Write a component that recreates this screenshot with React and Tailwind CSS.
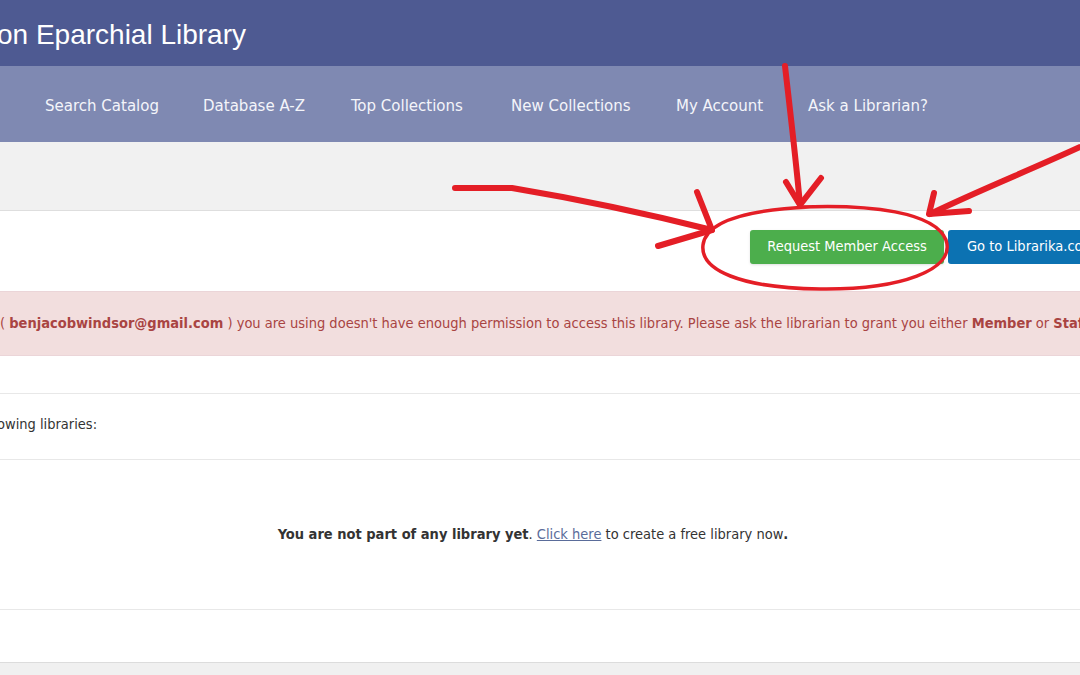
import React from 'react';

const navItems = [
  { label: 'Search Catalog', w: 'w-[158px]' },
  { label: 'Database A-Z', w: 'w-[148px]' },
  { label: 'Top Collections', w: 'w-[160px]' },
  { label: 'New Collections', w: 'w-[165px]' },
  { label: 'My Account', w: 'w-[132px]' },
  { label: 'Ask a Librarian?', w: 'w-[140px]' },
];

const Annotations = () => (
  <svg className="absolute inset-0 pointer-events-none" width="1080" height="675" viewBox="0 0 1080 675">
    <g fill="none" stroke="#e41e26" strokeLinecap="round" strokeLinejoin="round">
      {/* left arrow */}
      <path d="M455 188 L512 188 C560 196 640 212 712 230" strokeWidth="6" />
      <path d="M697 192 L712 230 L658 246" strokeWidth="6" />
      {/* middle arrow */}
      <path d="M785 66 C790 110 796 160 800 205" strokeWidth="6" />
      <path d="M786 182 L800 205 L821 178" strokeWidth="6" />
      {/* right arrow */}
      <path d="M1080 147 C1030 170 975 192 930 214" strokeWidth="6" />
      <path d="M934 193 L929 214 L969 211" strokeWidth="6" />
      {/* ellipse */}
      <path d="M800 207 C870 204 935 212 946 240 C956 270 900 290 820 289 C740 288 700 270 703 245 C706 222 745 210 810 207" strokeWidth="3.5" />
    </g>
  </svg>
);

export default function App() {
  return (
    <div className="relative w-[1080px] h-[675px] overflow-hidden bg-white" style={{ fontFamily: 'Tahoma, "DejaVu Sans Condensed", "DejaVu Sans", sans-serif' }}>
      <header className="h-[66px] bg-[#4e5a92] flex items-center pt-[3px]">
        <h1 className="text-white text-[28px] ml-[-3px] whitespace-nowrap" style={{ fontFamily: '"Liberation Sans", Arial, sans-serif' }}>on Eparchial Library</h1>
      </header>
      <nav className="h-[76px] bg-[#7f89b2] flex items-center pl-[45px] pt-[4px]">
        {navItems.map((n) => (
          <span key={n.label} className={`${n.w} shrink-0 text-[#f4f5fa] text-[16.7px] whitespace-nowrap`}>{n.label}</span>
        ))}
      </nav>
      <div className="h-[69px] bg-[#f1f1f1] border-b border-[#dedede]" />
      <div className="h-[80px] flex items-center justify-end gap-[4px] mr-[-120px] pb-[9px]">
        <button className="h-[34px] w-[194px] bg-[#4cae4c] rounded-[3px] text-white text-[14.5px] shadow-sm">Request Member Access</button>
        <button className="h-[34px] w-[252px] bg-[#0c72b2] rounded-[3px] text-white text-[14.5px] text-left pl-[19px] whitespace-nowrap">Go to Librarika.com</button>
      </div>
      <div className="h-[65px] bg-[#f2dede] border-y border-[#ebd5d8] flex items-center text-[#a94442] text-[14.5px] whitespace-nowrap">
        <span>( <b>benjacobwindsor@gmail.com</b> ) you are using doesn't have enough permission to access this library. Please ask the librarian to grant you either <b>Member</b> or <b>Staff</b> access.</span>
      </div>
      <div className="h-[38px] border-b border-[#e8e8e8]" />
      <div className="h-[66px] border-b border-[#e8e8e8] flex items-center text-[#333] text-[14.5px] whitespace-nowrap ml-[-3px] pb-[3px]">
        owing libraries:
      </div>
      <div className="h-[150px] border-b border-[#e8e8e8] flex items-center justify-center text-[#333] text-[14.5px] pr-[14px]">
        <p><b>You are not part of any library yet</b>. <a href="#" className="underline text-[#5a6c9a]">Click here</a> to create a free library now<b>.</b></p>
      </div>
      <div className="h-[53px] border-b border-[#dcdcdc]" />
      <div className="h-[12px] bg-[#f0f0f0]" />
      <Annotations />
    </div>
  );
}
